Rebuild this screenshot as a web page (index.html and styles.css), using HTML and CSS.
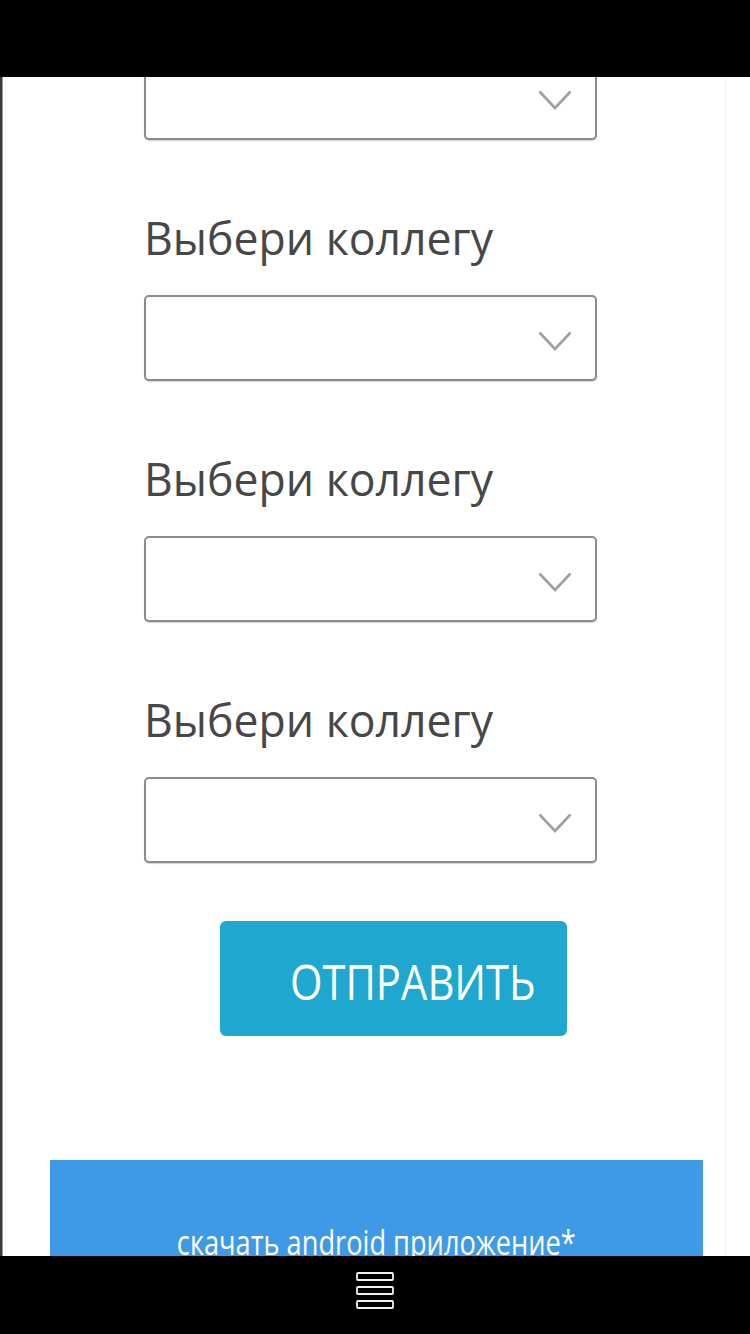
FILE: index.html
```html
<!DOCTYPE html>
<html lang="ru">
<head>
<meta charset="utf-8">
<title>Выбери коллегу</title>
<link rel="stylesheet" href="styles.css">
</head>
<body>
<div class="screen">
  <header class="status-bar"></header>
  <main class="viewport">
    <div class="page">
      <form class="form">
        <div class="field field-first">
          <div class="select">
            <svg class="chevron" viewBox="0 0 34 20" width="34" height="20"><polyline points="1.5,1.5 17,18 32.5,1.5"/></svg>
          </div>
        </div>
        <div class="field">
          <label class="label">Выбери коллегу</label>
          <div class="select">
            <svg class="chevron" viewBox="0 0 34 20" width="34" height="20"><polyline points="1.5,1.5 17,18 32.5,1.5"/></svg>
          </div>
        </div>
        <div class="field">
          <label class="label">Выбери коллегу</label>
          <div class="select">
            <svg class="chevron" viewBox="0 0 34 20" width="34" height="20"><polyline points="1.5,1.5 17,18 32.5,1.5"/></svg>
          </div>
        </div>
        <div class="field">
          <label class="label">Выбери коллегу</label>
          <div class="select">
            <svg class="chevron" viewBox="0 0 34 20" width="34" height="20"><polyline points="1.5,1.5 17,18 32.5,1.5"/></svg>
          </div>
        </div>
        <button type="button" class="submit"><span class="submit-text">ОТПРАВИТЬ</span></button>
      </form>
      <div class="banner">
        <span class="banner-text">скачать android приложение*</span>
      </div>
    </div>
  </main>
  <footer class="nav-bar">
    <svg class="menu-icon" viewBox="0 0 38 38" width="38" height="38">
      <rect x="1" y="1" width="36" height="7" rx="1"/>
      <rect x="1" y="15" width="36" height="7" rx="1"/>
      <rect x="1" y="29" width="36" height="7" rx="1"/>
    </svg>
  </footer>
</div>
</body>
</html>
```
FILE: styles.css
```css
* { box-sizing: border-box; }
html, body { margin: 0; padding: 0; background: #000; }
body { font-family: "Open Sans", "Liberation Sans", sans-serif; }

.screen {
  width: 750px;
  height: 1334px;
  display: flex;
  flex-direction: column;
  overflow: hidden;
}

.status-bar {
  height: 77px;
  flex: none;
  background: #000;
}

.viewport {
  height: 1179px;
  flex: none;
  overflow: hidden;
  background: #fff;
  box-shadow: inset 2px 0 0 #3a3a3a, inset 3px 0 0 #9a9a9a, inset -24px 0 0 #fff, inset -25px 0 0 #f4f4f4;
}

.page {
  margin-top: -23px;
  display: flex;
  flex-direction: column;
}

.form {
  display: flex;
  flex-direction: column;
  align-items: flex-start;
  padding-left: 144px;
}

.field {
  display: flex;
  flex-direction: column;
  margin-top: 68px;
}
.field-first { margin-top: 0; }

.label {
  display: inline-block;
  font-size: 45px;
  line-height: 60px;
  color: #474747;
  margin-bottom: 27px;
  font-weight: 400;
  white-space: nowrap;
  transform: scaleX(0.99);
  transform-origin: left center;
}

.select {
  width: 453px;
  height: 86px;
  border: 2px solid #8c8c8c;
  border-radius: 5px;
  box-shadow: 0 1px 1px rgba(0,0,0,0.18);
  display: flex;
  justify-content: flex-end;
  align-items: center;
  padding: 6px 23px 0 0;
  background: #fff;
}

.chevron polyline {
  fill: none;
  stroke: #a0a0a0;
  stroke-width: 2.6;
}

.submit {
  margin: 58px 0 0 76px;
  width: 347px;
  height: 115px;
  border: none;
  border-radius: 6px;
  background: #1ea8cf;
  color: #fff;
  display: flex;
  align-items: center;
  padding: 4px 0 0 70px;
  font-family: "Open Sans", "Liberation Sans", sans-serif;
  font-size: 50px;
}

.submit-text {
  display: inline-block;
  white-space: nowrap;
  transform: scaleX(0.835);
  transform-origin: left center;
}

.banner {
  margin: 124px 0 0 50px;
  width: 653px;
  height: 200px;
  background: #3e9ae6;
  text-align: center;
  padding-top: 59px;
}

.banner-text {
  display: inline-block;
  color: #fff;
  font-size: 34px;
  line-height: 46px;
  white-space: nowrap;
  transform: scaleX(0.8);
}

.nav-bar {
  height: 78px;
  flex: none;
  background: #000;
  display: flex;
  justify-content: center;
  padding-top: 16px;
}

.menu-icon rect {
  fill: none;
  stroke: #f2f2f2;
  stroke-width: 1.8;
}
```
